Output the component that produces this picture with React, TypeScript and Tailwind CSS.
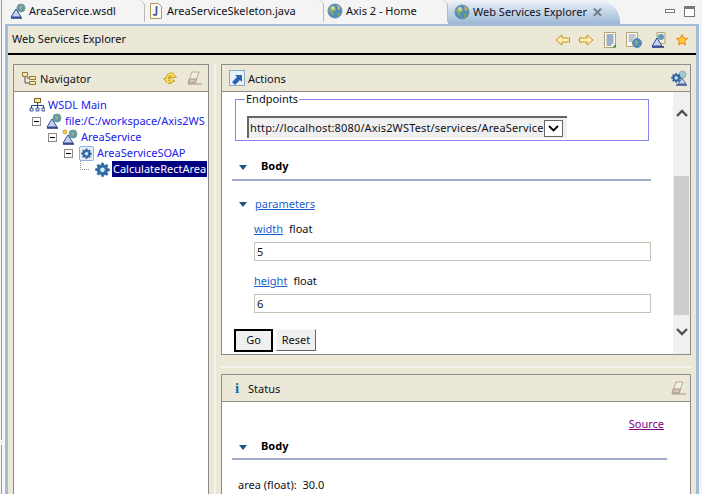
import type { ReactNode } from "react";

const font = "font-['Noto_Sans','Liberation_Sans',sans-serif]";

function Globe({ className = "" }: { className?: string }) {
  return (
    <svg className={className} width="16" height="16" viewBox="0 0 16 16">
      <circle cx="8" cy="8" r="7" fill="#4f8fc0" stroke="#6d8ea8" />
      <path d="M4 3l4 1 1 3-3 2 1 4-3-3-2-3z" fill="#8fae5a" />
      <path d="M10 2l3 2 0 3-2 0z" fill="#c9b35f" />
      <path d="M10 10l3-1-1 4-2 1z" fill="#7fa35a" />
      <circle cx="6" cy="5" r="2" fill="#fff" opacity="0.5" />
    </svg>
  );
}

function WsdlIcon() {
  return (
    <svg width="16" height="16" viewBox="0 0 16 16">
      <path d="M1 14L6 6l5 8z" fill="#c5d3ea" stroke="#2e4a9a" />
      <path d="M1 15h11" stroke="#1c2f80" strokeWidth="1.5" />
      <circle cx="11" cy="5" r="4" fill="#5a9bc4" stroke="#7a9a8a" />
      <path d="M9 3l3 0 0 3-2 1z" fill="#b7a74e" />
    </svg>
  );
}

function ServiceIcon() {
  return (
    <svg width="16" height="16" viewBox="0 0 16 16">
      <circle cx="3" cy="3" r="2" fill="#f4cf40" stroke="#a8842a" strokeWidth="0.600" />
      <path d="M1 14L6 6l5 8z" fill="#c5d3ea" stroke="#2e4a9a" />
      <path d="M1 15h11" stroke="#1c2f80" strokeWidth="1.5" />
      <circle cx="11" cy="5" r="4" fill="#5a9bc4" stroke="#7a9a8a" />
      <path d="M9 3l3 0 0 3-2 1z" fill="#b7a74e" />
    </svg>
  );
}

function JavaIcon() {
  return (
    <svg width="16" height="18" viewBox="0 0 16 18">
      <path d="M2.5 1.5h8l3 3v12h-11z" fill="#fbf8ea" stroke="#b09a62" />
      <path d="M9.5 5h-1v7c0 1.5-2.500 1.500-3 0" fill="none" stroke="#2b4f9e" strokeWidth="1.6" />
    </svg>
  );
}

function ArrowIcon({ flip = false }: { flip?: boolean }) {
  return (
    <svg width="15" height="12" viewBox="0 0 15 12" className={flip ? "-scale-x-100" : ""}>
      <path d="M1 6l6-5v3h7.500v4H7v3z" fill="#fdf0b8" stroke="#c8901c" />
    </svg>
  );
}

function PageIcon() {
  return (
    <svg width="14" height="16" viewBox="0 0 14 16">
      <path d="M1.500.5h11v15h-11z" fill="#fdfbf0" stroke="#b4a270" />
      <path d="M3.500 3h7M3.500 5h7M3.500 7h7M3.500 9h7M3.500 11h7M3.500 13h5" stroke="#3f63a8" />
      <path d="M9 15.500l4-4v4z" fill="#4c9a50" />
    </svg>
  );
}

function PageGlobeIcon() {
  return (
    <svg width="16" height="16" viewBox="0 0 16 16">
      <path d="M.5.5h11v14H.5z" fill="#fdfbf0" stroke="#b4a270" />
      <path d="M2.500 3h7M2.500 5h7M2.500 7h5M2.500 9h4" stroke="#7d8fb0" />
      <circle cx="11" cy="11" r="4.500" fill="#4f8fc0" stroke="#5f8aa5" />
      <path d="M9 8l3 1 0 3-3 1z" fill="#8fae5a" />
    </svg>
  );
}

function WsdlPageIcon() {
  return (
    <svg width="16" height="16" viewBox="0 0 16 16">
      <path d="M6 .5h8v11H6z" fill="#f3ecd6" stroke="#b4a270" />
      <path d="M1 14L6 6l5 8z" fill="#c5d3ea" stroke="#2e4a9a" />
      <path d="M1 15h12" stroke="#1c2f80" strokeWidth="1.5" />
      <circle cx="10" cy="5" r="3" fill="#5a9bc4" />
    </svg>
  );
}

function StarIcon() {
  return (
    <svg width="12" height="12" viewBox="0 0 12 12">
      <path d="M6 .5l1.600 3.600 3.900.4-2.900 2.600.8 3.900L6 9l-3.400 2 .8-3.900L.5 4.500l3.900-.4z" fill="#ffd02a" stroke="#f0801c" />
    </svg>
  );
}

function NavigatorIcon() {
  return (
    <svg width="16" height="14" viewBox="0 0 16 14">
      <path d="M1.500 1.500h5v4h-5zM8.500 5.500h6v3h-6zM8.500 10.500h6v3h-6z" fill="#f6e7a8" stroke="#8d7a3a" />
      <path d="M4 6v6h4M6 7h2" fill="none" stroke="#555" />
    </svg>
  );
}

function SyncIcon() {
  return (
    <svg width="16" height="16" viewBox="0 0 16 16">
      <path d="M5 9C5 6 7 4 11 4" fill="none" stroke="#c09a20" strokeWidth="3.600" />
      <path d="M11 12C11 10 11 12 6 12" fill="none" stroke="#c09a20" strokeWidth="3.600" />
      <path d="M1.500 8.500h7L5 13z" fill="#f8d860" stroke="#c09a20" strokeWidth="0.800" />
      <path d="M14.500 7.500h-7L11 3z" fill="#f8d860" stroke="#c09a20" strokeWidth="0.800" />
      <path d="M5 9C5 6 7 4 11 4" fill="none" stroke="#f8d860" strokeWidth="1.800" />
      <path d="M11 8C11 11 9 12 5 12" fill="none" stroke="#f8d860" strokeWidth="1.800" />
    </svg>
  );
}

function EraserIcon() {
  return (
    <svg width="16" height="14" viewBox="0 0 16 14">
      <path d="M5 1h7L8 12H1z" fill="#f3ede2" stroke="#b8ab98" />
      <path d="M2.500 8h7L8 12H1z" fill="#d9c4b0" stroke="#a89a88" />
      <path d="M1 13h14" stroke="#a09684" />
    </svg>
  );
}

function ActionsIcon() {
  return (
    <svg width="16" height="16" viewBox="0 0 16 16">
      <rect x="0.500" y="0.500" width="15" height="15" fill="#e8f0f8" stroke="#8fa8c8" />
      <path d="M3 12l5-5-2-2h7v7l-2-2-5 5z" fill="#2a64b0" />
    </svg>
  );
}

function WsdlTreeIcon() {
  return (
    <svg width="16" height="16" viewBox="0 0 16 16">
      <rect x="5.500" y="1.500" width="6" height="4" fill="#f6e7a8" stroke="#7a6a20" />
      <path d="M8.500 5.500v3M2.500 11V8.500h12V11M8.500 8.500V11" fill="none" stroke="#23408c" />
      <path d="M1 11h3v3H1zM7 11h3v3H7zM13 11h3v3h-3z" fill="#dbe6f5" stroke="#23408c" strokeWidth="0.800" />
    </svg>
  );
}

const gearPath =
  "M7 1h2l.4 2 1.500.6L12.600 2.500 14 3.900 12.900 5.600l.6 1.400 2 .4v2l-2 .4-.6 1.400 1.100 1.700-1.400 1.400-1.700-1.100-1.500.6L9 15.500H7l-.4-2-1.500-.6-1.700 1.100L2 12.600l1.100-1.700-.6-1.400-2-.4v-2l2-.4.6-1.400L2 3.900l1.400-1.400 1.700 1.100 1.500-.6z";

function Gear({ size = 14 }: { size?: number }) {
  return (
    <svg width={size} height={size} viewBox="0 0 16 16">
      <path d={gearPath} fill="#2f6ca8" stroke="#1d4a80" strokeWidth="0.500" />
      <circle cx="8" cy="8.300" r="2.500" fill="#dbe8f5" />
    </svg>
  );
}

function GearWsdlIcon() {
  return (
    <svg width="16" height="16" viewBox="0 0 16 16">
      <circle cx="11.500" cy="4.500" r="3.500" fill="#9cc8d8" stroke="#7a9a8a" strokeWidth="0.600" />
      <path d="M7 14l4-6 4 6z" fill="#c5d3ea" stroke="#2e4a9a" strokeWidth="0.800" />
      <path d="M5 15h11" stroke="#1c2f80" strokeWidth="1.200" />
      <g transform="translate(0 2.500) scale(0.650)">
        <path d={gearPath} fill="#2f6ca8" stroke="#1d4a80" strokeWidth="0.500" />
        <circle cx="8" cy="8.300" r="2.500" fill="#dbe8f5" />
      </g>
    </svg>
  );
}

function BoxedGear() {
  return (
    <span className="w-[15px] h-[15px] border border-[#8fb0d8] bg-[#e6eefa] rounded-[2px] flex items-center justify-center">
      <Gear size={11} />
    </span>
  );
}

function ExpandBox() {
  return (
    <span className="w-[9px] h-[9px] border border-[#8a8a8a] bg-white flex items-center justify-center shrink-0">
      <span className="w-[5px] h-px bg-black" />
    </span>
  );
}

function Triangle() {
  return (
    <svg width="8" height="5" viewBox="0 0 8 5" className="shrink-0">
      <path d="M0 0h8L4 5z" fill="#1c5488" />
    </svg>
  );
}

function Chevron({ up = false }: { up?: boolean }) {
  return (
    <svg width="12" height="9" viewBox="0 0 12 9" className={up ? "rotate-180" : ""}>
      <path d="M1 2l5 5 5-5" fill="none" stroke="#505050" strokeWidth="2.400" />
    </svg>
  );
}

function Tab({ icon, label, width }: { icon: ReactNode; label: string; width: string }) {
  return (
    <div className={`flex items-center gap-[3px] h-[22px] border-r border-[#b8b8b8] rounded-tr-[6px] pl-[3px] whitespace-nowrap ${width}`}>
      <span className="w-4 flex justify-center">{icon}</span>
      <span>{label}</span>
    </div>
  );
}

function PanelHeader({ icon, title, right }: { icon: ReactNode; title: string; right?: ReactNode }) {
  return (
    <div className="h-[27px] shrink-0 bg-[#ebe8d8] border-b border-[#8c8c8c] flex items-center pl-[7px] pr-[3px]">
      <span className="w-4 flex justify-center">{icon}</span>
      <span className="ml-[3px] translate-y-px">{title}</span>
      <span className="ml-auto flex items-center">{right}</span>
    </div>
  );
}

function TreeRow({ indent, icon, label, box = true, selected = false }: { indent: string; icon: ReactNode; label: string; box?: boolean; selected?: boolean }) {
  return (
    <div className={`h-4 flex items-center whitespace-nowrap ${indent}`}>
      {box && <ExpandBox />}
      {!box && <span className="w-[9px] h-[9px] shrink-0 border-l border-b border-dotted border-[#999] -translate-y-1" />}
      <span className="ml-[5px] w-4 flex justify-center shrink-0">{icon}</span>
      <span className={selected ? "ml-[2px] bg-[#000080] text-white px-px" : "ml-[3px] text-[#2020f0]"}>{label}</span>
    </div>
  );
}

function BodyHeading({ lift = "" }: { lift?: string }) {
  return (
    <div className={`h-[22px] border-b-2 border-[#a0acc8] flex items-center pl-[7px] ${lift}`}>
      <Triangle />
      <span className="ml-[14px] font-bold text-black -translate-y-px">Body</span>
    </div>
  );
}

function ParamField({ name, value }: { name: string; value: string }) {
  return (
    <div className="ml-[22px]">
      <div className="h-4 flex items-center gap-[6px]">
        <a className="text-[#1a5fd0] underline">{name}</a>
        <span>float</span>
      </div>
      <input
        readOnly
        value={value}
        className={`mt-[5px] block w-[397px] h-[19px] border border-[#c4c2b4] px-[2px] text-[11px] outline-none ${font}`}
      />
    </div>
  );
}

export default function App() {
  return (
    <div className={`w-[702px] h-[494px] overflow-hidden bg-[#f4f4f4] flex text-[11px] leading-4 text-[#10101a] ${font}`}>
      {/* left edge of the workbench */}
      <div className="w-[5px] shrink-0 pl-[1px] flex flex-col gap-[5px]">
        <span className="h-[440px] w-px bg-[#9a9a9a]" />
        <span className="flex-1 w-px bg-[#9a9a9a]" />
      </div>

      <div className="flex-1 min-w-0 flex flex-col">
        {/* editor tabs */}
        <div className="h-[24px] shrink-0 flex items-start pl-[2px]">
          <Tab icon={<WsdlIcon />} label="AreaService.wsdl" width="w-[138px]" />
          <Tab icon={<JavaIcon />} label="AreaServiceSkeleton.java" width="w-[179px]" />
          <Tab icon={<Globe />} label="Axis 2 - Home" width="w-[124px]" />
          <div className="h-[24px] w-[172px] flex items-center gap-[3px] pl-[6px] whitespace-nowrap rounded-tl-[6px] rounded-tr-[22px] bg-gradient-to-b from-[#eef3f8] to-[#9cb8d6]">
            <Globe />
            <span>Web Services Explorer</span>
            <span className="ml-[2px] text-[#6a7a8a] text-[13px] font-bold">✕</span>
          </div>
          <div className="ml-auto mr-[7px] flex items-center gap-[9px] h-[16px] mt-[3px]">
            <span className="w-[10px] h-[4px] border border-[#777] bg-white" />
            <span className="w-[11px] h-[11px] border border-[#777] border-t-[3px] bg-white" />
          </div>
        </div>

        <div className="flex-1 min-h-0 mr-[3px] border-l-[3px] border-t-2 border-r-[3px] border-[#a3bbd6] bg-[#ebe8d8] flex flex-col">
          {/* view title */}
          <div className="h-[29px] shrink-0 border-b-2 border-black flex items-center pl-[4px] pr-[8px]">
            <span className="-translate-y-px">Web Services Explorer</span>
            <div className="ml-auto flex items-center gap-[9px]">
              <ArrowIcon />
              <ArrowIcon flip />
              <PageIcon />
              <PageGlobeIcon />
              <WsdlPageIcon />
              <StarIcon />
            </div>
          </div>

          <div className="flex-1 min-h-0 flex pt-[9px] pl-[5px] pr-[5px]">
            {/* navigator */}
            <div className="w-[196px] shrink-0 border-t border-l border-r border-[#8c8c8c] bg-white flex flex-col self-stretch overflow-hidden">
              <PanelHeader
                icon={<NavigatorIcon />}
                title="Navigator"
                right={
                  <span className="flex items-center gap-[9px] pr-[2px]">
                    <SyncIcon />
                    <EraserIcon />
                  </span>
                }
              />
              <div className="pt-[5px] overflow-hidden">
                <div className="h-4 flex items-center pl-[15px] text-[#2020f0]">
                  <WsdlTreeIcon />
                  <span className="ml-[3px]">WSDL Main</span>
                </div>
                <TreeRow indent="pl-[18px]" icon={<WsdlIcon />} label="file:/C:/workspace/Axis2WS" />
                <TreeRow indent="pl-[34px]" icon={<ServiceIcon />} label="AreaService" />
                <TreeRow indent="pl-[50px]" icon={<BoxedGear />} label="AreaServiceSOAP" />
                <TreeRow indent="pl-[66px]" icon={<Gear size={15} />} label="CalculateRectArea" box={false} selected />
              </div>
            </div>

            {/* sash */}
            <div className="w-[12px] shrink-0 flex justify-center">
              <span className="w-[2px] h-full bg-[#f4f2ea]" />
            </div>

            <div className="flex-1 min-w-0 flex flex-col">
              {/* actions */}
              <div className="h-[291px] shrink-0 border border-[#8c8c8c] bg-white flex flex-col">
                <PanelHeader
                  icon={<ActionsIcon />}
                  title="Actions"
                  right={<GearWsdlIcon />}
                />
                <div className="flex-1 min-h-0 flex">
                  <div className="flex-1 min-w-0 overflow-hidden pl-[10px] pr-[22px] relative">
                    <fieldset className="ml-[3px] w-[414px] h-[50px] border border-[#8888f0] pl-[10px] -mt-px">
                      <legend className="px-[1px] -ml-px">Endpoints</legend>
                    </fieldset>
                    <div className="absolute left-[25px] top-[24px] w-[320px] h-[22px] bg-[#f0f0f0] border-t-2 border-l-2 border-[#666] flex items-center whitespace-nowrap pl-[1px]">
                      <span className="w-[294px] overflow-hidden tracking-[0.15px]">http://localhost:8080/Axis2WSTest/services/AreaService</span>
                      <span className="w-[19px] h-[17px] border border-[#666] bg-white flex items-center justify-center">
                        <svg width="11" height="7" viewBox="0 0 11 7"><path d="M1 1l4.500 4.500L10 1" fill="none" stroke="#000" strokeWidth="1.800" /></svg>
                      </span>
                    </div>
                    <div className="mt-[18px]">
                      <BodyHeading lift="pb-[4px]" />
                    </div>
                    <div className="mt-[15px] pl-[7px] h-4 flex items-center">
                      <Triangle />
                      <a className="ml-[8px] text-[#1a5fd0] underline">parameters</a>
                    </div>
                    <div className="mt-[9px]">
                      <ParamField name="width" value="5" />
                    </div>
                    <div className="mt-[12px]">
                      <ParamField name="height" value="6" />
                    </div>
                    <div className="mt-[16px] flex items-start gap-[3px] ml-[2px]">
                      <button className="w-[39px] h-[23px] border-2 border-black bg-[#f0f0f0] pb-px">Go</button>
                      <button className="w-[40px] h-[22px] border border-[#f8f8f8] border-r-[#666] border-b-[#666] bg-[#f0f0f0] pb-px">Reset</button>
                    </div>
                  </div>
                  <div className="w-[17px] shrink-0 bg-[#f0f0f0] flex flex-col items-center">
                    <span className="h-[17px] mt-[13px] flex items-center"><Chevron up /></span>
                    <span className="w-[15px] h-[139px] mt-[54px] bg-[#cdcdcd]" />
                    <span className="h-[17px] mt-[8px] flex items-center"><Chevron /></span>
                  </div>
                </div>
              </div>

              {/* sash */}
              <div className="h-[19px] shrink-0 flex flex-col justify-center">
                <span className="h-[2px] bg-[#f4f2ea] translate-y-[2px]" />
              </div>

              {/* status */}
              <div className="flex-1 min-h-0 border-t border-l border-r border-[#8c8c8c] bg-white flex flex-col">
                <PanelHeader
                  icon={<span className="font-bold text-[#1c6cb0] text-[15px] font-['Liberation_Serif',serif]">i</span>}
                  title="Status"
                  right={<EraserIcon />}
                />
                <div className="pl-[10px] pr-[23px]">
                  <div className="h-4 mt-[14px] flex justify-end pr-[3px]">
                    <a className="text-[#800080] underline">Source</a>
                  </div>
                  <div className="mt-[6px]">
                    <BodyHeading lift="pb-[2px]" />
                  </div>
                  <div className="mt-[17px] pl-[6px] whitespace-pre">area (float):  30.0</div>
                </div>
              </div>
            </div>
          </div>
        </div>
      </div>
    </div>
  );
}
